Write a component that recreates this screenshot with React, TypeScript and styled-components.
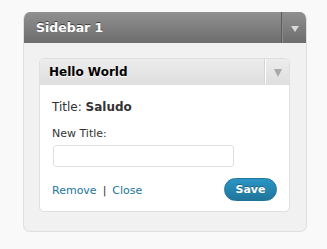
import React from "react"
import styled, { createGlobalStyle } from "styled-components"

const GlobalStyle = createGlobalStyle`
  body {
    margin: 0;
    background: #f9f9f9;
    font-family: "DejaVu Sans", Verdana, sans-serif;
  }
`

const Page = styled.div`
  padding: 12px 0 0 23px;
`

const Sidebar = styled.div`
  width: 284px;
  border-radius: 7px;
  overflow: hidden;
  border: 1px solid #dfdfdf;
  border-top: none;
  box-sizing: border-box;
  background: #f1f1f1;
`

const SidebarHead = styled.div`
  display: flex;
  height: 31px;
  background: linear-gradient(to bottom, #909090, #6d6d6d);
  color: #fff;
  margin: 0 -1px;
`

const SidebarTitle = styled.div`
  flex: 1;
  display: flex;
  align-items: center;
  padding-left: 13px;
  font-size: 12.5px;
  font-weight: bold;
  text-shadow: 0 -1px 0 #3f3f3f;
`

const Toggle = styled.div<{ $dark?: boolean }>`
  width: ${p => (p.$dark ? 25 : 23)}px;
  display: flex;
  align-items: center;
  justify-content: center;
  border-left: 1px solid ${p => (p.$dark ? "#5d5d5d" : "#fff")};
  box-shadow: ${p => (p.$dark ? "inset 1px 0 0 #8a8a8a" : "-1px 0 0 #d6d6d6")};
`

const Arrow = styled.span<{ $dark?: boolean }>`
  width: 0;
  height: 0;
  border-left: ${p => (p.$dark ? 4 : 4.5)}px solid transparent;
  border-right: ${p => (p.$dark ? 4 : 4.5)}px solid transparent;
  border-top: ${p => (p.$dark ? 6 : 8)}px solid ${p => (p.$dark ? "#d8d8d8" : "#a8a8a8")};
  margin-top: 2px;
`

const SidebarBody = styled.div`
  padding: 15px 16px 19px 15px;
`

const Widget = styled.div`
  background: #fff;
  border: 1px solid #dfdfdf;
  border-radius: 5px;
  overflow: hidden;
`

const WidgetHead = styled.div`
  display: flex;
  height: 25px;
  background: linear-gradient(to bottom, #ececec, #dfdfdf);
  border-bottom: 1px solid #dfdfdf;
`

const WidgetTitle = styled.div`
  flex: 1;
  display: flex;
  align-items: center;
  padding-left: 9px;
  font-size: 12px;
  font-weight: bold;
  color: #000;
  text-shadow: 0 1px 0 #fff;
`

const WidgetBody = styled.div`
  padding: 12px 12px 10px;
  color: #333;
`

const TitleLine = styled.div`
  font-size: 12px;
  line-height: 18px;
  padding-top: 1px;
  b {
    font-weight: bold;
  }
`

const Label = styled.label`
  display: block;
  margin-top: 10px;
  font-size: 11px;
  line-height: 16px;
`

const Input = styled.input`
  display: block;
  margin: 3px 0 0 1px;
  width: 181px;
  height: 22px;
  box-sizing: border-box;
  border: 1px solid #dfdfdf;
  border-radius: 3px;
  background: #fff;
  outline: none;
`

const Footer = styled.div`
  display: flex;
  align-items: center;
  justify-content: space-between;
  margin-top: 11px;
`

const Links = styled.div`
  display: flex;
  font-size: 11px;
  line-height: 16px;
  padding-top: 3px;
  color: #333;
  a {
    color: #21759b;
    text-decoration: none;
  }
`

const Sep = styled.span`
  margin: 0 6px;
`

const SaveButton = styled.button`
  width: 53px;
  height: 23px;
  border-radius: 12px;
  border: 1px solid #21759b;
  background: linear-gradient(to bottom, #2a95c5, #21759b);
  color: #fff;
  font-family: "DejaVu Sans", Verdana, sans-serif;
  font-size: 11px;
  font-weight: bold;
  text-shadow: 0 -1px 0 rgba(0, 0, 0, 0.3);
  padding: 0;
  cursor: pointer;
`

export default function App() {
  return (
    <Page>
      <GlobalStyle />
      <Sidebar>
        <SidebarHead>
          <SidebarTitle>Sidebar 1</SidebarTitle>
          <Toggle $dark>
            <Arrow $dark />
          </Toggle>
        </SidebarHead>
        <SidebarBody>
          <Widget>
            <WidgetHead>
              <WidgetTitle>Hello World</WidgetTitle>
              <Toggle>
                <Arrow />
              </Toggle>
            </WidgetHead>
            <WidgetBody>
              <TitleLine>
                Title: <b>Saludo</b>
              </TitleLine>
              <Label>New Title:</Label>
              <Input type="text" />
              <Footer>
                <Links>
                  <a href="#">Remove</a>
                  <Sep>|</Sep>
                  <a href="#">Close</a>
                </Links>
                <SaveButton>Save</SaveButton>
              </Footer>
            </WidgetBody>
          </Widget>
        </SidebarBody>
      </Sidebar>
    </Page>
  )
}
